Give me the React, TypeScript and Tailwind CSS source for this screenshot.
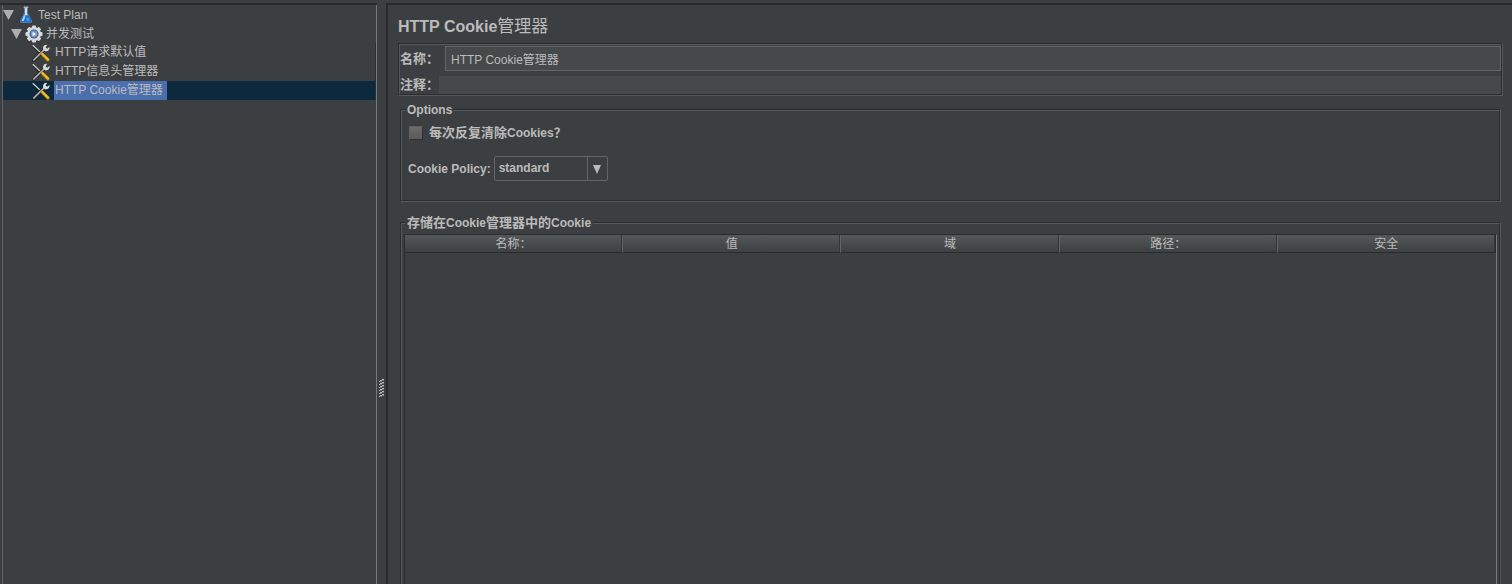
import React from "react";

const FlaskIcon = () => (
  <svg width="14" height="18" viewBox="0 0 14 18" className="shrink-0">
    <path d="M5 1.5 L5 7 L1 14.8 Q.6 17 2.4 17 L11.6 17 Q13.4 17 13 14.8 L9 7 L9 1.5 Z" fill="#5f7c99" />
    <path d="M6 1.5 L8 1.5 L8 8 L9.4 10.5 L4.6 10.5 L6 8 Z" fill="#d5dfe8" />
    <path d="M4.1 9.2 L9.9 9.2 L12.3 15 Q12.3 16 11.4 16 L2.6 16 Q1.7 16 1.7 15 Z" fill="#1a6fd0" />
    <path d="M4.9 9.4 L6.6 9.4 L4.9 15 L2.6 15 Z" fill="#a9d3fa" />
    <path d="M7.5 11.5 L9.5 11.5 L10.7 15 L7.6 15 Z" fill="#3d98ef" />
    <rect x="4.5" y=".5" width="5" height="1.5" rx=".7" fill="#a9b5c0" />
  </svg>
);

const GearIcon = () => (
  <svg width="18" height="18" viewBox="0 0 18 18" className="shrink-0">
    <g fill="#d8d9db">
      <rect x="7" y=".5" width="4" height="17" rx="1" />
      <rect x="7" y=".5" width="4" height="17" rx="1" transform="rotate(45 9 9)" />
      <rect x="7" y=".5" width="4" height="17" rx="1" transform="rotate(90 9 9)" />
      <rect x="7" y=".5" width="4" height="17" rx="1" transform="rotate(135 9 9)" />
      <circle cx="9" cy="9" r="7" />
    </g>
    <circle cx="9" cy="9" r="4.5" fill="#3a5f93" />
    <circle cx="9" cy="9" r="3.4" fill="#7397c8" />
    <path d="M7.6 6.8 L11.2 9 L7.6 11.2 Z" fill="#f4f8ff" />
  </svg>
);

const ToolsIcon = () => (
  <svg width="18" height="18" viewBox="0 0 18 18" className="shrink-0">
    <path d="M1.2 2.2 L9.6 10.4" stroke="#1b1c1d" strokeWidth="2" />
    <path d="M.8 1.2 L9.6 9.6" stroke="#d6d6d6" strokeWidth="1.3" />
    <path d="M1.8 16.2 L12.5 5.5" stroke="#242526" strokeWidth="3.2" strokeLinecap="round" />
    <path d="M1.8 16 L12.5 5.5" stroke="#b4b4b4" strokeWidth="1.7" strokeLinecap="round" />
    <path d="M15.2 .8 L12.6 1 L11 3.2 L11.2 6 L13.6 7.4 L16.2 6.8 L17.6 4.6 L17.4 3 L15.2 4.8 L13.6 3.4 Z" fill="#dadada" />
    <path d="M10.4 10.4 L16 16" stroke="#8f6a10" strokeWidth="3.4" strokeLinecap="round" />
    <path d="M10.4 10 L16 15.6" stroke="#f2bd22" strokeWidth="2.2" strokeLinecap="round" />
  </svg>
);

const Arrow = () => (
  <svg width="11" height="12" viewBox="0 0 11 12" className="shrink-0">
    <path d="M0 1 L11 1 L5.5 11 Z" fill="#adadad" />
  </svg>
);

const items = ["HTTP请求默认值", "HTTP信息头管理器", "HTTP Cookie管理器"];
const columns = ["名称：", "值", "域", "路径：", "安全"];

const Tree = () => (
  <ul className="h-full border-x border-l-[#636668] border-r-[#77797b]">
    <li className="flex h-[19px] items-center gap-[5px]">
      <Arrow />
      <FlaskIcon />
      <span className="leading-4">Test Plan</span>
    </li>
    <li className="flex h-[19px] items-center gap-[3px] pl-2">
      <Arrow />
      <GearIcon />
      <span className="leading-4">并发测试</span>
    </li>
    {items.map((item, i) => (
      <li
        key={item}
        className={`flex h-[19px] items-center gap-1 border-r border-[#2a2c2e] pl-[29px] ${i === 2 ? "bg-[#0d293e]" : ""}`}
      >
        <ToolsIcon />
        <span className={`px-px pr-1 leading-[19px] ${i === 2 ? "bg-[#4b6eaf]" : ""}`}>{item}</span>
      </li>
    ))}
  </ul>
);

// Bold Chinese text is set one size above the Latin text beside it
const Zh = ({ children }: { children: React.ReactNode }) => <span className="text-[13px]">{children}</span>;

type EtchedProps = { title?: React.ReactNode; className?: string; children: React.ReactNode };

const Etched = ({ title, className = "", children }: EtchedProps) => (
  <section className={`flex flex-col border border-t-[#2a2c2e] border-r-[#56595b] border-b-[#56595b] border-l-[#2a2c2e] ${className}`}>
    <div className="grow border border-t-[#56595b] border-r-[#2a2c2e] border-b-[#2a2c2e] border-l-[#56595b]">
      {title && (
        <h2 className="-mt-[9px] ml-[3px] h-4 w-fit bg-[#3c3f41] px-0.5 font-bold leading-4">{title}</h2>
      )}
      {children}
    </div>
  </section>
);

const App = () => {
  return (
    <div className="flex h-screen overflow-hidden bg-[#3c3f41] pt-[3px] font-['Liberation_Sans','Noto_Sans_CJK_SC',sans-serif] text-xs text-[#bbbbbb]">
      <aside className="w-[377px] shrink-0 border-t-2 border-[#282a2c] pl-0.5">
        <Tree />
      </aside>
      <div className="flex w-[9px] shrink-0 items-center justify-center pt-[194px]">
        <svg width="5" height="24" viewBox="0 0 5 24" shapeRendering="crispEdges">
          {[0, 3, 6, 9, 12, 15].map((y) => (
            <g key={y}>
              <path d={`M3 ${y}h2v1h-2zM1 ${y + 1}h2v1h-2zM0 ${y + 2}h1v1h-1z`} fill="#b9b9b9" />
              <path d={`M3 ${y + 1}h2v1h-2zM1 ${y + 2}h2v1h-2z`} fill="#727475" />
            </g>
          ))}
        </svg>
      </div>

      <main className="min-w-0 grow border-t-2 border-l-2 border-[#282a2c] pl-2.5">
        <h1 className="mt-2.5 mb-1 h-6 text-base font-bold leading-6">
          HTTP Cookie<span className="text-[17px] font-normal">管理器</span>
        </h1>

        <Etched className="mr-[9px]">
          <div className="flex h-[27px] items-center">
            <label htmlFor="name" className="w-[45px] font-bold"><Zh>名称：</Zh></label>
            <input
              id="name"
              defaultValue="HTTP Cookie管理器"
              className="h-[25px] min-w-0 grow border border-[#646464] bg-[#45494a] px-[5px] pb-px outline-none"
            />
          </div>
          <div className="mt-1 flex h-[18px] items-center">
            <label htmlFor="comment" className="w-[39px] font-bold"><Zh>注释：</Zh></label>
            <input id="comment" className="h-[18px] min-w-0 grow bg-[#45494a] px-1 outline-none" />
          </div>
        </Etched>

        <Etched title="Options" className="mt-[13px] mr-[11px] ml-0.5 h-[93px]">
          <label className="mt-[7px] ml-[7px] flex h-4 w-fit items-center gap-1.5 font-bold">
            <input
              type="checkbox"
              className="size-3.5 appearance-none border border-t-[#5c5f60] border-r-[#2f3133] border-b-[#2f3133] border-l-[#5c5f60] bg-linear-to-b from-[#6a6a6a] to-[#5a5a5a]"
            />
            <span><Zh>每次反复清除</Zh>Cookies<Zh>？</Zh></span>
          </label>
          <div className="mt-[15px] ml-1.5 flex items-center gap-[3px] font-bold">
            <label htmlFor="policy">Cookie Policy:</label>
            <div className="relative flex h-[25px] w-[114px] rounded-xs border border-[#646464]">
              <select id="policy" className="w-full appearance-none px-1 pb-0.5 font-bold outline-none">
                <option>standard</option>
              </select>
              <span className="pointer-events-none absolute inset-y-0 right-0 flex w-5 items-center justify-center border-l border-[#646464] pt-0.5">
                <svg width="8" height="9" viewBox="0 0 8 9">
                  <path d="M0 0 L8 0 L4 9 Z" fill="#bbbbbb" />
                </svg>
              </span>
            </div>
          </div>
        </Etched>

        <Etched
          title={<><Zh>存储在</Zh>Cookie<Zh>管理器中的</Zh>Cookie</>}
          className="mt-5 mr-[11px] ml-0.5 min-h-screen"
        >
          <div className="mt-[3px] mr-0.5 ml-0.5 min-h-screen border border-t-[#2a2c2e] border-r-[#77797b] border-l-[#2a2c2e]">
            <table className="w-full table-fixed border-separate border-spacing-0">
              <thead>
                <tr className="bg-linear-to-b from-[#55585a] to-[#3c3f41]">
                  {columns.map((column) => (
                    <th
                      key={column}
                      className="h-[18px] border-r border-b border-r-[#616466] border-b-[#2a2c2e] p-0 font-normal leading-4 shadow-[inset_-1px_0_#333638] last:border-r-[#2a2c2e]"
                    >
                      {column}
                    </th>
                  ))}
                </tr>
              </thead>
              <tbody />
            </table>
          </div>
        </Etched>
      </main>
    </div>
  );
};

export default App;
